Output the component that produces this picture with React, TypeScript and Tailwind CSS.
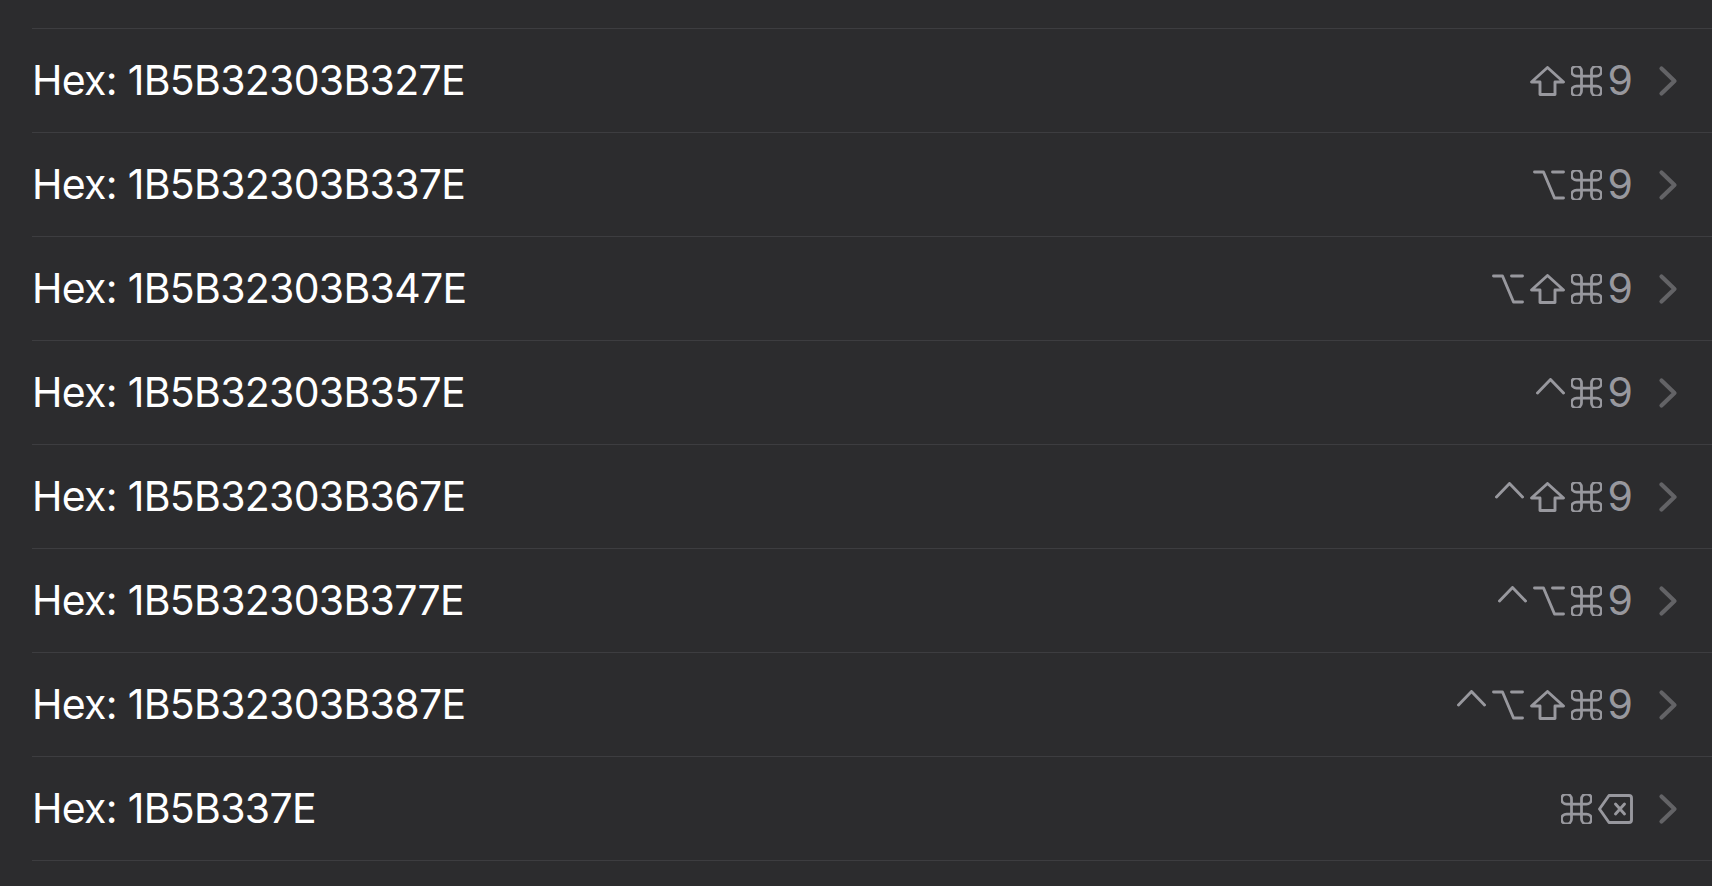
import React from 'react';

type Key = 'ctrl' | 'opt' | 'shift' | 'cmd' | 'del' | '9';

interface Row {
  hex: string;
  keys: Key[];
}

const rows: Row[] = [
  { hex: '1B5B32303B327E', keys: ['shift', 'cmd', '9'] },
  { hex: '1B5B32303B337E', keys: ['opt', 'cmd', '9'] },
  { hex: '1B5B32303B347E', keys: ['opt', 'shift', 'cmd', '9'] },
  { hex: '1B5B32303B357E', keys: ['ctrl', 'cmd', '9'] },
  { hex: '1B5B32303B367E', keys: ['ctrl', 'shift', 'cmd', '9'] },
  { hex: '1B5B32303B377E', keys: ['ctrl', 'opt', 'cmd', '9'] },
  { hex: '1B5B32303B387E', keys: ['ctrl', 'opt', 'shift', 'cmd', '9'] },
  { hex: '1B5B337E', keys: ['cmd', 'del'] },
];

function KeyGlyph({ k }: { k: Key }) {
  const common = {
    fill: 'none',
    stroke: 'currentColor',
    strokeWidth: 2.9,
    strokeLinecap: 'round' as const,
    strokeLinejoin: 'round' as const,
  };
  switch (k) {
    case 'shift':
      return (
        <svg width="35" height="30" viewBox="0 0 35 30" className="shrink-0">
          <path d="M17.5 1.5 L33.5 16 H25 V28.5 H10 V16 H1.5 Z" {...common} />
        </svg>
      );
    case 'cmd':
      return (
        <svg width="31" height="30" viewBox="3 3 18 18" className="shrink-0">
          <path
            d="M15 6v12a3 3 0 1 0 3-3H6a3 3 0 1 0 3 3V6a3 3 0 1 0-3 3h12a3 3 0 1 0-3-3"
            {...common}
            strokeWidth={1.65}
          />
        </svg>
      );
    case 'opt':
      return (
        <svg width="32" height="30" viewBox="0 0 32 30" className="shrink-0">
          <path d="M1.5 2 H10.5 L21.5 28 H30.5 M19.5 2 H30.5" {...common} />
        </svg>
      );
    case 'ctrl':
      return (
        <svg width="29" height="30" viewBox="0 0 29 30" className="shrink-0">
          <path d="M1.5 15 L14.5 1.5 L27.5 15" {...common} />
        </svg>
      );
    case 'del':
      return (
        <svg width="35" height="30" viewBox="0 0 35 30" className="shrink-0">
          <path d="M1.5 15 L11 1.5 H31 Q33.5 1.5 33.5 4 V26 Q33.5 28.5 31 28.5 H11 Z" {...common} />
          <path d="M17.5 10 L26.5 20 M26.5 10 L17.5 20" {...common} />
        </svg>
      );
    default:
      return <span className="leading-none text-[41px] -mt-[1px]">9</span>;
  }
}

function ShortcutRow({ row }: { row: Row }) {
  return (
    <li className="flex items-center h-[104px] border-b border-[#3d3d40] pr-[34px]">
      <span className="flex-1 text-white text-[41px] leading-none tracking-[-0.7px]">
        Hex: {row.hex}
      </span>
      <div className="flex items-center gap-[6px] text-[#98989e]">
        {row.keys.map((k, i) => (
          <KeyGlyph key={i} k={k} />
        ))}
      </div>
      <svg width="20" height="32" viewBox="0 0 20 32" className="ml-[25px] text-[#636366]">
        <path
          d="M3.5 3.5 L16.5 16 L3.5 28.5"
          fill="none"
          stroke="currentColor"
          strokeWidth={4.2}
          strokeLinecap="round"
          strokeLinejoin="round"
        />
      </svg>
    </li>
  );
}

export default function App() {
  return (
    <div className="min-h-screen w-full bg-[#2c2c2e] font-['Inter',sans-serif]">
      <div className="h-[28px]" />
      <ul className="ml-[32px] border-t border-[#3d3d40]">
        {rows.map((row) => (
          <ShortcutRow key={row.hex} row={row} />
        ))}
      </ul>
    </div>
  );
}
